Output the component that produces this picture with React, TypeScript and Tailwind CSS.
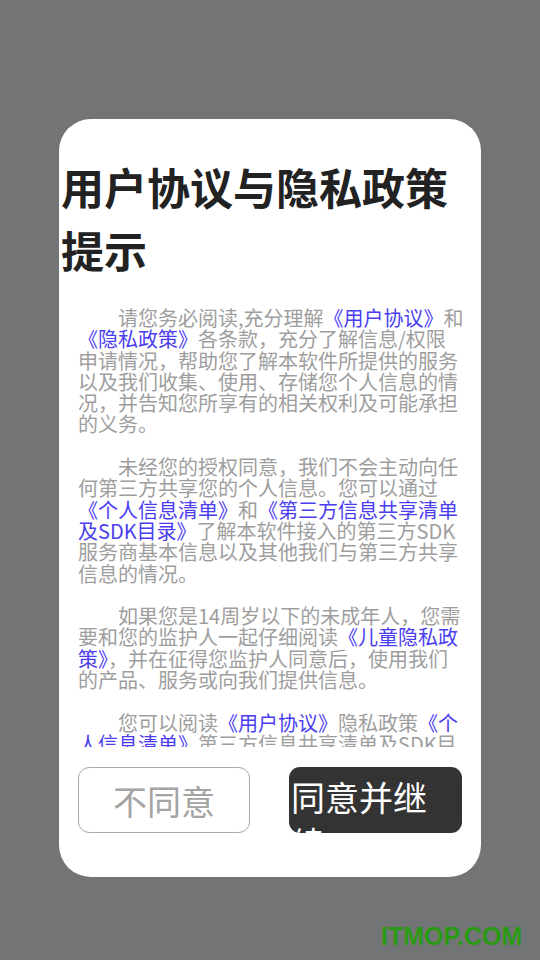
const font = { fontFamily: '"Noto Sans CJK SC", "Noto Sans", sans-serif' };

function Link({ children }: { children: React.ReactNode }) {
  return <span className="text-[#4b3ef0]">{children}</span>;
}

function Line({ children, first }: { children: React.ReactNode; first?: boolean }) {
  return <span className={first ? "block whitespace-nowrap pl-[40px]" : "block whitespace-nowrap"}>{children}</span>;
}

export default function App() {
  return (
    <div className="relative min-h-[960px] w-[540px] overflow-hidden bg-[#737476] pt-[119px]" style={font}>
      <div className="mx-[59px] flex h-[758px] w-[422px] flex-col rounded-[32px] bg-white">
        <h1 className="pl-[2px] pt-[36px] text-[43px] font-bold leading-[63px] text-[#222222]">
          用户协议与隐私政策提示
        </h1>

        <div className="mx-[19px] mt-[26px] h-[440px] overflow-hidden text-[20px] leading-[21.3px] text-[#9e9e9e]">
          <p>
            <Line first>
              请您务必阅读,充分理解<Link>《用户协议》</Link>和
            </Line>
            <Line>
              <Link>《隐私政策》</Link>各条款，充分了解信息/权限
            </Line>
            <Line>申请情况，帮助您了解本软件所提供的服务</Line>
            <Line>以及我们收集、使用、存储您个人信息的情</Line>
            <Line>况，并告知您所享有的相关权利及可能承担</Line>
            <Line>的义务。</Line>
          </p>
          <p className="mt-[21.3px]">
            <Line first>未经您的授权同意，我们不会主动向任</Line>
            <Line>何第三方共享您的个人信息。您可以通过</Line>
            <Line>
              <Link>《个人信息清单》</Link>和<Link>《第三方信息共享清单</Link>
            </Line>
            <Line>
              <Link>及SDK目录》</Link>了解本软件接入的第三方SDK
            </Line>
            <Line>服务商基本信息以及其他我们与第三方共享</Line>
            <Line>信息的情况。</Line>
          </p>
          <p className="mt-[21.3px]">
            <Line first>如果您是14周岁以下的未成年人，您需</Line>
            <Line>
              要和您的监护人一起仔细阅读<Link>《儿童隐私政</Link>
            </Line>
            <Line>
              <Link>策》</Link>，并在征得您监护人同意后，使用我们
            </Line>
            <Line>的产品、服务或向我们提供信息。</Line>
          </p>
          <p className="mt-[21.3px]">
            <Line first>
              您可以阅读<Link>《用户协议》</Link>隐私政策<Link>《个</Link>
            </Line>
            <Line>
              <Link>人信息清单》</Link>第三方信息共享清单及SDK目
            </Line>
            <Line>录了解详细信息。</Line>
          </p>
        </div>

        <div className="mx-[19px] mt-[20px] flex justify-between">
          <button className="flex h-[66px] w-[172px] items-center justify-center rounded-[11px] border border-[#a9a9a9] text-[34px] text-[#a4a4a4]">
            不同意
          </button>
          <button className="h-[66px] w-[173px] overflow-hidden rounded-[11px] bg-[#333333] pl-[2px] pr-[30px] pt-[7px] text-left text-[34px] leading-[46px] text-white">
            同意并继续
          </button>
        </div>
      </div>

      <div
        className="absolute left-[381px] top-[920px] text-[25px] font-bold leading-[32px] text-[#2a9a14]"
        style={{ fontFamily: '"Liberation Sans", Arial, sans-serif' }}
      >
        ITMOP.COM
      </div>
    </div>
  );
}
